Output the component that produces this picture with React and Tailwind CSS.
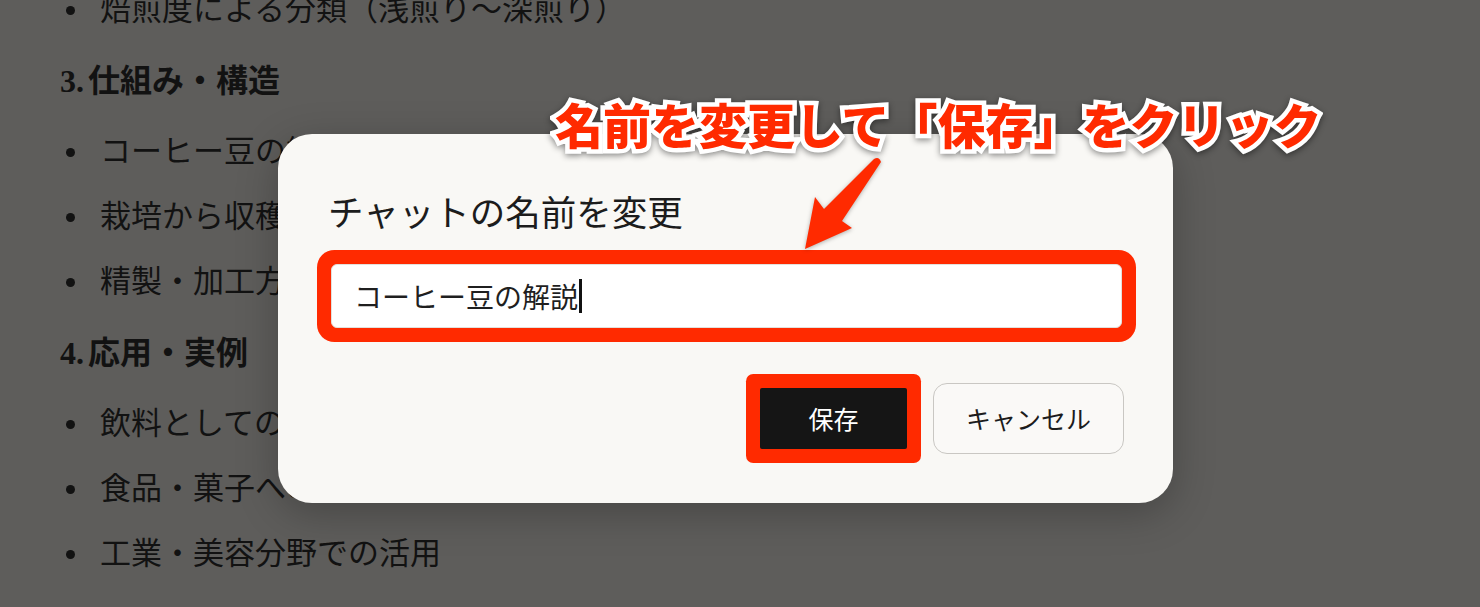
const SERIF = "font-['Liberation_Serif','Noto_Sans_CJK_JP',serif]";
const SANS = "font-['Noto_Sans_CJK_JP','Noto_Sans',sans-serif]";

const sections = [
  { type: "item", text: "焙煎度による分類（浅煎り～深煎り）" },
  { type: "heading", num: "3.", text: "仕組み・構造" },
  { type: "item", text: "コーヒー豆の組成と成分" },
  { type: "item", text: "栽培から収穫までの流れ" },
  { type: "item", text: "精製・加工方法の違い" },
  { type: "heading", num: "4.", text: "応用・実例" },
  { type: "item", text: "飲料としての利用" },
  { type: "item", text: "食品・菓子への応用" },
  { type: "item", text: "工業・美容分野での活用" },
];

function BackgroundDoc() {
  return (
    <div className={`flex flex-col mt-[-22.5px] pl-[60px] text-[#121212] ${SERIF}`}>
      {sections.map((s, i) =>
        s.type === "heading" ? (
          <div key={i} className="h-[77px] flex items-center gap-[4px] text-[32px] font-bold">
            <span>{s.num}</span>
            <span>{s.text}</span>
          </div>
        ) : (
          <div key={i} className="h-[65px] flex items-center text-[31px]">
            <span className="w-[9px] h-[9px] rounded-full bg-[#121212] ml-[6px] mr-[25px] shrink-0" />
            <span>{s.text}</span>
          </div>
        )
      )}
    </div>
  );
}

function RenameDialog() {
  return (
    <div
      className={`absolute left-[278px] top-[134px] w-[895px] bg-[#f9f8f5] rounded-[34px] shadow-[0_10px_40px_rgba(0,0,0,0.25)] pt-[52px] pb-[49px] pl-[53px] pr-[51px] ${SANS}`}
    >
      <h2 className="text-[35.5px] leading-[50px] text-[#1c1c1c] font-normal -ml-[3px]">
        チャットの名前を変更
      </h2>

      {/* Input with red highlight */}
      <div className="mt-[28px] h-[64px] bg-white rounded-[6px] border border-[#e2e0dc] shadow-[0_0_0_14px_#ff2a00] flex items-center px-[22px]">
        <span className="text-[28px] text-[#1f1f1f]">コーヒー豆の解説</span>
        <span className="w-[3px] h-[34px] bg-[#111] ml-[1px]" />
      </div>

      {/* Buttons */}
      <div className="mt-[55px] flex items-center justify-end gap-[26px] -mr-[2px]">
        <button className="w-[147px] h-[61px] bg-[#151515] text-white text-[25px] rounded-[2px] shadow-[0_0_0_14px_#ff2a00]">
          保存
        </button>
        <button className="w-[191px] h-[71px] border border-[#c9c7c3] rounded-[14px] text-[25px] text-[#1c1c1c] bg-[#faf9f7]">
          キャンセル
        </button>
      </div>
    </div>
  );
}

function Annotation() {
  return (
    <>
      <div
        className={`absolute left-[555px] top-[99px] text-[48px] leading-[48px] font-black text-[#ff2a00] whitespace-nowrap [-webkit-text-stroke:9px_white] [paint-order:stroke_fill] drop-shadow-[0_2px_3px_rgba(0,0,0,0.45)] ${SANS}`}
      >
        名前を変更して「保存」をクリック
      </div>
      <svg
        className="absolute inset-0 w-[1480px] h-[607px] pointer-events-none drop-shadow-[0_1px_2px_rgba(0,0,0,0.3)]"
        viewBox="0 0 1480 607"
      >
        <path
          d="M874 159 Q879 156 881 162 L842 221 L852 228 L805 249 L815 197 L824 209 Z"
          fill="#ff2a00"
        />
      </svg>
    </>
  );
}

export default function App() {
  return (
    <div className="relative w-[1480px] h-[607px] overflow-hidden bg-[#5e5d5b]">
      <BackgroundDoc />
      <RenameDialog />
      <Annotation />
    </div>
  );
}
